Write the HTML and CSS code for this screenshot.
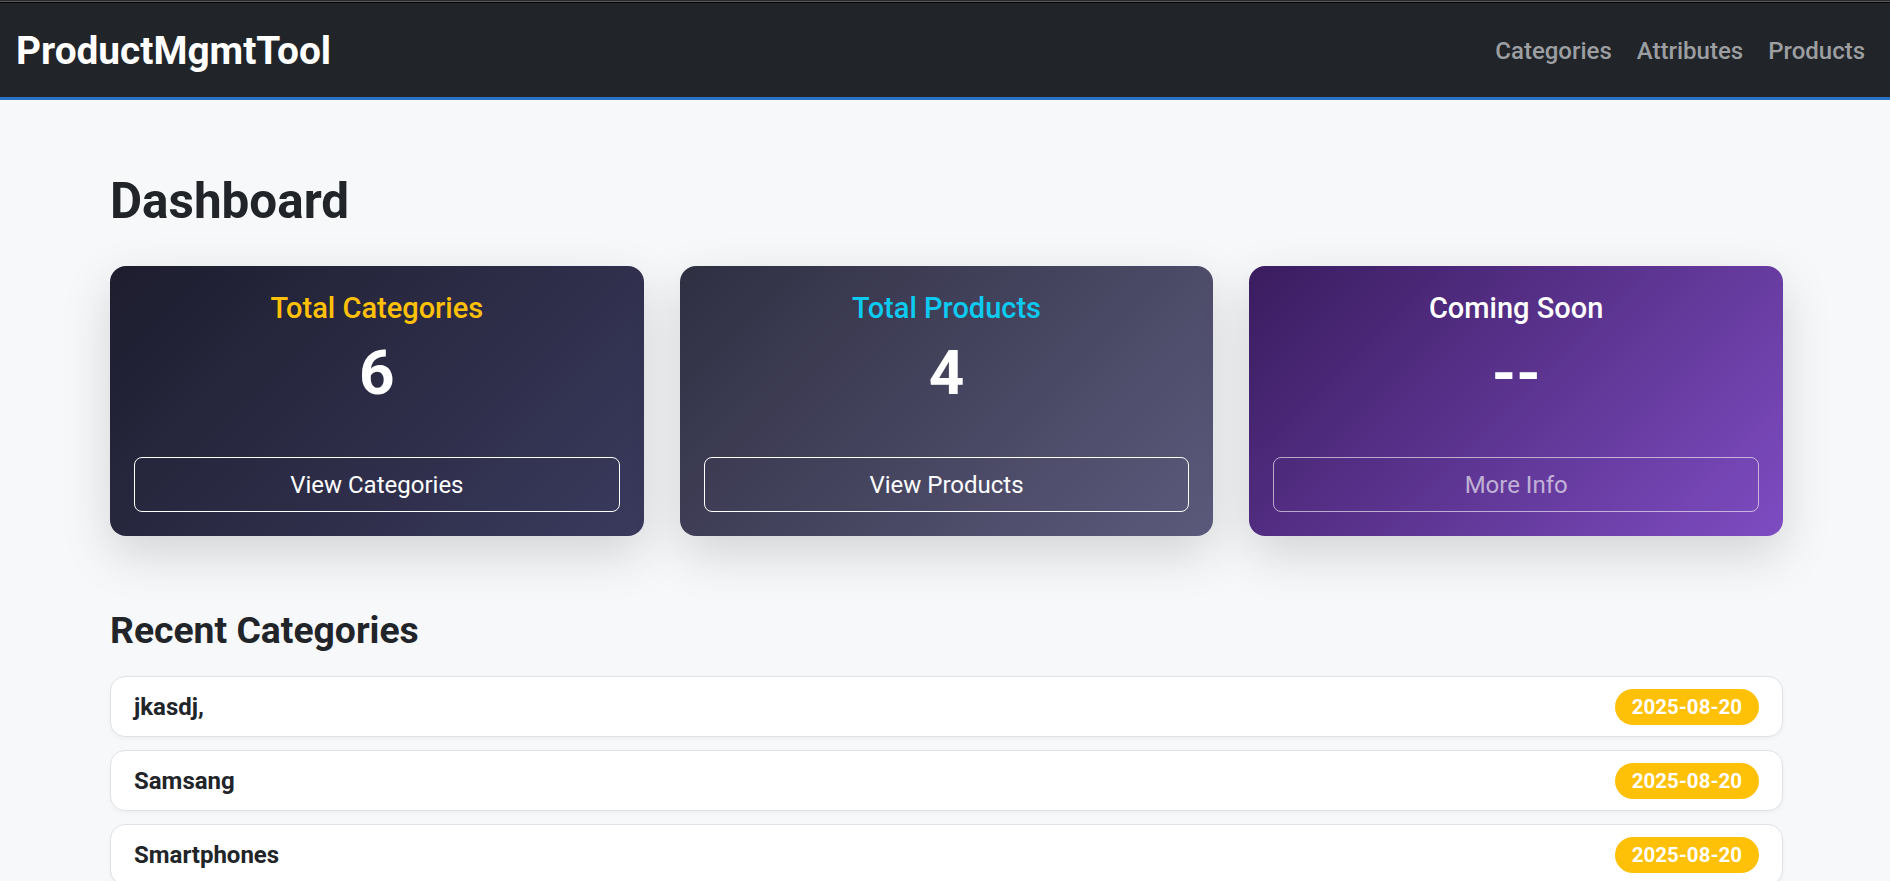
FILE: index.html
```html
<!DOCTYPE html>
<html lang="en">
<head>
<meta charset="utf-8">
<title>ProductMgmtTool</title>
<link rel="stylesheet" href="styles.css">
</head>
<body>
<nav class="navbar">
  <a class="brand" href="#">ProductMgmtTool</a>
  <div class="nav-links">
    <a class="nav-link" href="#">Categories</a>
    <a class="nav-link" href="#">Attributes</a>
    <a class="nav-link" href="#">Products</a>
  </div>
</nav>
<main class="container">
  <h1 class="page-title">Dashboard</h1>
  <section class="cards">
    <div class="card card-categories">
      <div class="card-title title-warning">Total Categories</div>
      <div class="card-number">6</div>
      <a class="card-btn" href="#">View Categories</a>
    </div>
    <div class="card card-products">
      <div class="card-title title-info">Total Products</div>
      <div class="card-number">4</div>
      <a class="card-btn" href="#">View Products</a>
    </div>
    <div class="card card-soon">
      <div class="card-title title-white">Coming Soon</div>
      <div class="card-number">--</div>
      <a class="card-btn card-btn-disabled" href="#">More Info</a>
    </div>
  </section>
  <h2 class="section-title">Recent Categories</h2>
  <ul class="recent-list">
    <li class="recent-item"><span class="recent-name">jkasdj,</span><span class="badge">2025-08-20</span></li>
    <li class="recent-item"><span class="recent-name">Samsang</span><span class="badge">2025-08-20</span></li>
    <li class="recent-item"><span class="recent-name">Smartphones</span><span class="badge">2025-08-20</span></li>
  </ul>
</main>
</body>
</html>
```
FILE: styles.css
```css
* { box-sizing: border-box; }
html, body { margin: 0; padding: 0; }
body {
  background: #f7f8fa;
  font-family: Roboto, "Liberation Sans", Arial, sans-serif;
  color: #212529;
}
a { text-decoration: none; }

.navbar {
  height: 100px;
  display: flex;
  align-items: center;
  justify-content: space-between;
  padding: 5px 25px 0 16px;
  background: linear-gradient(to bottom, #2b2b2b 0 1px, #5a5a5a 1px 2px, #050505 2px 3px, #212529 3px);
  border-bottom: 3px solid #2a74c8;
}
.brand {
  color: #ffffff;
  font-weight: 700;
  font-size: 38.8px;
  line-height: 1;
}
.nav-links {
  display: flex;
  gap: 25px;
}
.nav-link {
  color: #9c9ea1;
  font-weight: 500;
  font-size: 24px;
  line-height: 1;
}

.container {
  margin: 0 107px 0 110px;
  padding-top: 71px;
}
.page-title {
  margin: 0 0 35px;
  font-size: 49.4px;
  font-weight: 700;
  line-height: 60px;
}
.cards {
  display: grid;
  grid-template-columns: repeat(3, 1fr);
  gap: 36px;
}
.card {
  height: 270px;
  border-radius: 16px;
  padding: 24px;
  display: flex;
  flex-direction: column;
  align-items: stretch;
  text-align: center;
  box-shadow: 0 18px 50px rgba(0, 0, 0, 0.15);
}
.card-categories { background: linear-gradient(135deg, #1d1d2e 0%, #3a3a5e 100%); }
.card-products { background: linear-gradient(135deg, #2f2f42 0%, #5c5a7c 100%); }
.card-soon { background: linear-gradient(135deg, #3a1c5f 0%, #7e4cc2 100%); }

.card-title {
  font-size: 29px;
  font-weight: 500;
  line-height: 36px;
  margin-bottom: 10px;
}
.title-warning { color: #ffc107; }
.title-info { color: #0dcaf0; }
.title-white { color: #ffffff; }
.card-number {
  color: #ffffff;
  font-size: 62px;
  font-weight: 700;
  line-height: 74px;
}
.card-btn {
  margin-top: auto;
  height: 55px;
  display: flex;
  align-items: center;
  justify-content: center;
  border: 1px solid #ffffff;
  border-radius: 8px;
  color: #ffffff;
  font-size: 24px;
  font-weight: 400;
}
.card-btn-disabled { opacity: 0.6; }

.section-title {
  margin: 72px 0 24px;
  font-size: 37.3px;
  font-weight: 700;
  line-height: 44px;
}
.recent-list {
  list-style: none;
  margin: 0;
  padding: 0;
  display: flex;
  flex-direction: column;
  gap: 13px;
}
.recent-item {
  height: 61px;
  display: flex;
  align-items: center;
  justify-content: space-between;
  padding: 0 23px;
  background: #ffffff;
  border: 1px solid #dfe2e6;
  border-radius: 15px;
  box-shadow: 0 2px 4px rgba(0, 0, 0, 0.04);
}
.recent-name {
  font-size: 24px;
  font-weight: 700;
}
.badge {
  height: 36px;
  display: inline-flex;
  align-items: center;
  padding: 0 17px;
  border-radius: 18px;
  background: #ffc107;
  color: #ffffff;
  font-size: 20.5px;
  font-weight: 700;
}
```
